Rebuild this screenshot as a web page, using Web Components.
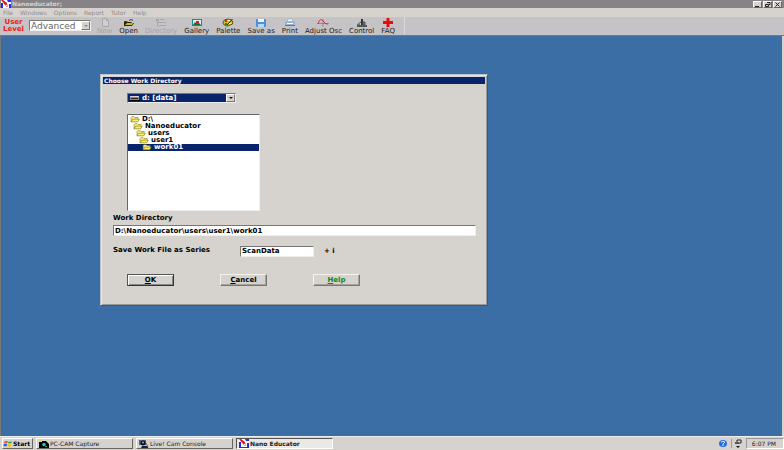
<!DOCTYPE html>
<html lang="en">
<head>
<meta charset="utf-8">
<title>Nanoeducator</title>
<style>
  html, body { margin: 0; height: 100%; }
  body { font: 7px/8px "DejaVu Sans", Verdana, sans-serif; color: #000; overflow: hidden; }
</style>
</head>
<body>
<nano-app></nano-app>
<script>
const define = (name, html, setup) => {
  const template = document.createElement('template');
  template.innerHTML = html;
  customElements.define(name, class extends HTMLElement {
    connectedCallback() {
      if (this.shadowRoot) return;
      const root = this.attachShadow({ mode: 'open' });
      root.append(template.content.cloneNode(true));
      if (setup) setup(root, this);
    }
  });
};

const art = {
  app: '<rect x="1" width="10" height="9" fill="#fff"/><path d="M1 3h2v6H1zM9 4h2v5H9zM3 8h6v1H3zM7 0h4v2H8z" fill="#2828e8"/><path d="M1 0h2l4 3v2H5z" fill="#e01818"/><path d="M5 5l2-1 1 2-1 1z" fill="none" stroke="#d05060" stroke-width=".6"/>',
  new: '<path d="M3.5.5h4l2 2v6h-6zM7.500.500v2h2" fill="#d0cdd0" stroke="#aaa6aa"/>',
  open: '<path d="M1 3h3l1 1h4v2H1z" fill="#786c10"/><path d="M1 8V4l2-1 1 1h4v1h3L9 8z" fill="#2c2800"/><path d="M2 7l2-2h6L9 7z" fill="#c8bc20"/><path d="M6 2.500l2-1 2 1" fill="none" stroke="#222" stroke-width=".8"/>',
  tree: '<path d="M1 1h3v2H1zM5 4h3v1H5zM5 7h3v1H5z" fill="#aaa6aa"/><path d="M2.500 3v5H5M2.500 4.500H5M8 4.500h3M5 1.500h4M8 7.500h3" fill="none" stroke="#aaa6aa"/>',
  gallery: '<rect x="1" y="1" width="10" height="7" fill="#178a86"/><rect x="2" y="2" width="8" height="5" fill="#d9f5f5"/><path d="M2 7l2-3 2 2 2-1 2 2z" fill="#107030"/><path d="M5 3h3v3H5z" fill="#e02020"/>',
  palette: '<path d="M1 4Q2 1 6 1t5 3q0 3-3 3L6 8Q1 8 1 4" fill="#d0c020" stroke="#302800" stroke-width=".7"/><path d="M3 2h2v2H3z" fill="#e02020"/><path d="M3 5h2v2H3z" fill="#149030"/><path d="M6 2h2v1H6zM7 5h2v1H7z" fill="#fff"/><path d="M10.500 1L5 7" stroke="#222"/>',
  save: '<rect x="1" y="1" width="10" height="8" rx="1" fill="#4b91d4"/><path d="M3 1h6v3H3z" fill="#e9f4ff"/><path d="M3 6h6v3H3z" fill="#b9d8f4"/>',
  print: '<path d="M3 4l1-3h4l1 3z" fill="#f4f8ff" stroke="#8aa5c4" stroke-width=".6"/><path d="M1 4l1-1h8l1 1v3H1z" fill="#94b4da"/><path d="M1 7h10v1H1z" fill="#587498"/><path d="M3 5h6v1H3z" fill="#fff"/>',
  osc: '<path d="M0 5.500h12M6 1v8" stroke="#777" stroke-width=".7"/><path d="M1 6Q3-1 6 3t5 3" fill="none" stroke="#c83848"/>',
  control: '<path d="M1 7h10v2H1z" fill="#555"/><path d="M5 1h2v6H5z" fill="#333"/><path d="M2 6l3-2M7 4h2v3H7z" fill="#777" stroke="#555"/><path d="M1 6h3v1H1z" fill="#3a9060"/>',
  faq: '<path d="M4.500 0h3v3H11v3H7.500v3h-3V6H1V3h3.500z" fill="#e80c10"/>',
  folder: '<path d="M1 7.500V2L2 1h3l1 1h4v1.500" fill="#fff69c" stroke="#7c7000" stroke-width=".8"/><path d="M1 7.500L3 4h8.500L9.500 7.500z" fill="#ffef63" stroke="#7c7000" stroke-width=".8"/>',
  drive: '<path d="M1 2h9v4H1z" fill="#8c8c84"/><path d="M1 2h9v1H1z" fill="#d6d3ce"/><path d="M2 4h7v1H2z" fill="#222"/><path d="M1 6h10v1H1z" fill="#000"/>',
  windows: '<path d="M2 2q2-1 4 0L5 4Q3 3 1 4z" fill="#e84020"/><path d="M7 2q2 1 4 0l-1 2q-2 1-4 0z" fill="#30a038"/><path d="M1 5q2-1 4 0L4 8Q2 7 .5 8z" fill="#2060d8"/><path d="M6 5q2 1 4 0L9 8q-2 1-4 0z" fill="#f0c010"/>',
  capture: '<path d="M1 3h2l1-1h4l3 3v4H1z" fill="#000"/><circle cx="6" cy="5.500" r="1.700" fill="#20c8d8"/><path d="M2 1h2v2H2z" fill="#e8d820"/><path d="M7 7h2v1H7z" fill="#20b030"/>',
  live: '<path d="M1 1h7v5H1z" fill="#586078"/><circle cx="5" cy="4" r="2.500" fill="#111"/><circle cx="5" cy="3.500" r="1" fill="#80a8e0"/><path d="M4 7h6v2H3z" fill="#18204a"/><path d="M8 4l2 4" stroke="#806070"/>',
  globe: '<ellipse cx="6" cy="4.500" rx="4" ry="3.500" fill="#2470e8"/><path d="M4 3q2-1.500 4 0L6 5v2" fill="none" stroke="#d8e8ff"/>',
  tray: '<path d="M5 1h4v3H5z" fill="#ddd" stroke="#222"/><path d="M3 3h4v2H3z" fill="#555"/><path d="M4 7h4L6 9z" fill="#111"/>'
};

define('px-icon', `<style>:host{display:block;flex:none;width:12px;height:9px}svg{display:block;width:100%;height:100%}</style><svg viewBox="0 0 12 9" aria-hidden="true"></svg>`,
  (root, el) => { root.querySelector('svg').innerHTML = art[el.getAttribute('name')]; });

define('window-controls', `<style>
  :host{display:flex;gap:1px}
  button{width:9px;height:7px;padding:0;border:1px solid;border-color:#fff #666 #666 #fff;background:#d6d3ce;display:grid;place-items:center}
  svg{width:7px;height:5px;display:block} path{fill:none;stroke:#222}
</style>
<button aria-label="Minimize"><svg viewBox="0 0 7 5"><path d="M1 4.500h4"/></svg></button>
<button aria-label="Restore"><svg viewBox="0 0 7 5"><path d="M3 .5h3v2H5M1.500 2.500h3v2h-3z"/></svg></button>
<button aria-label="Close"><svg viewBox="0 0 7 5"><path d="M1.500.500l4 4M5.500.500l-4 4"/></svg></button>`);

define('title-bar', `<style>
  :host{display:flex;align-items:center;height:8px;background:#868286;color:#d6d3ce;font-size:6px;font-weight:bold;padding-right:2px}
  span{flex:1}
</style><px-icon name="app"></px-icon><span><slot></slot></span><window-controls></window-controls>`);

define('menu-bar', `<style>
  :host{display:flex;gap:7px;height:9px;padding-left:3px;background:#d6d3ce;font-size:6px}
  ::slotted(button){all:unset;color:#8c8a88;line-height:9px}
</style><slot></slot>`);

define('tool-button', `<style>
  :host{display:block}
  button{display:flex;flex-direction:column;align-items:center;border:0;padding:0;background:none;font:inherit;color:#222}
  button:disabled{color:#a5a2a5}
</style><button><slot></slot></button>`,
  (root, el) => {
    const button = root.querySelector('button');
    const icon = document.createElement('px-icon');
    icon.setAttribute('name', el.getAttribute('icon'));
    button.prepend(icon);
    button.disabled = el.hasAttribute('disabled');
  });

define('drop-down', `<style>
  :host{display:flex;box-sizing:border-box;position:relative;border:1px solid;border-color:#777 #eee #eee #777;background:#fff}
  select{appearance:none;flex:1;min-width:0;border:0;margin:0;padding:0 0 0 1px;border-radius:0;background:transparent;font:inherit;color:inherit;outline:0}
  i{flex:none;width:9px;box-sizing:border-box;border:1px solid;border-color:#fff #777 #777 #fff;background:#d6d3ce;display:grid;place-items:center;pointer-events:none}
  i::after{content:"";border:2px solid transparent;border-top-color:var(--arrow,#111);border-bottom:0}
  .fill{display:flex;flex:1;min-width:0;align-items:center;background:var(--fill,#fff)}
</style><div class="fill"><slot name="icon"></slot><select></select></div><i></i>`,
  (root, el) => {
    const select = root.querySelector('select');
    select.setAttribute('aria-label', el.getAttribute('label'));
    select.append(new Option(el.getAttribute('value')));
  });

define('tool-bar', `<style>
  :host{display:flex;align-items:flex-start;height:18px;background:#c6c3c6;border-bottom:1px solid #777;padding-left:2px}
  b{color:#f01c1c;text-align:center;padding-top:2px;line-height:7px;width:23px}
  drop-down{width:62px;height:11px;margin:3px 6px 0 4px;font-size:9px;color:#666;--arrow:#888}
  .tools{display:flex;gap:7px;padding:1px 9px 0 0;border-right:1px solid #dedbde;height:16px}
</style>
<b>User Level</b><drop-down label="User Level" value="Advanced"></drop-down>
<div class="tools">
<tool-button icon="new" disabled>New</tool-button><tool-button icon="open">Open</tool-button>
<tool-button icon="tree" disabled>Directory</tool-button><tool-button icon="gallery">Gallery</tool-button>
<tool-button icon="palette">Palette</tool-button><tool-button icon="save">Save as</tool-button>
<tool-button icon="print">Print</tool-button><tool-button icon="osc">Adjust Osc</tool-button>
<tool-button icon="control">Control</tool-button><tool-button icon="faq">FAQ</tool-button></div>`);

define('push-button', `<style>
  :host{display:block;width:47px}
  button{width:100%;height:12px;padding:0;border:1px solid;border-color:#f4f2ee #777 #777 #f4f2ee;box-shadow:inset -1px -1px #a5a29c;background:#d6d3ce;font:inherit;font-weight:bold;color:inherit;line-height:9px}
  :host([default]) button{border-color:#555 #333 #333 #555;box-shadow:inset 1px 1px #fff,inset -1px -1px #888}
</style><button><slot></slot></button>`);

define('text-field', `<style>
  :host{display:block}
  input{display:block;box-sizing:border-box;width:100%;height:11px;border:1px solid;border-color:#777 #eee #eee #777;padding:0 1px;background:#fff;font:inherit;color:#000;outline:0;border-radius:0}
</style><input>`,
  (root, el) => {
    const input = root.querySelector('input');
    input.value = el.getAttribute('value');
    input.setAttribute('aria-label', el.getAttribute('label'));
  });

define('folder-item', `<style>
  :host{display:flex;align-items:center;gap:1px;height:7px;line-height:7px;padding-left:calc(1px + var(--depth,0) * 3px)}
  :host([aria-selected="true"]){background:#08246b;color:#fff}
  px-icon{width:12px;height:7px}
</style><px-icon name="folder"></px-icon><slot></slot>`);

define('directory-dialog', `<style>
  :host{display:block;box-sizing:border-box;border:1px solid;border-color:#b8c0cc #555 #555 #b8c0cc;box-shadow:inset 1px 1px #e8e6e2,inset -1px -1px #999;background:#d6d3ce;padding:2px;font-weight:bold}
  h1{margin:0;padding-left:1px;background:#08246b;color:#fff;font-size:6px;line-height:7px;height:7px}
  form{padding:9px 9px 17px 10px;display:flex;flex-direction:column}
  drop-down{width:109px;height:10px;margin-left:14px;--fill:#08246b;color:#fff}
  drop-down px-icon{margin-left:1px}
  .list{margin:11px 0 0 14px;width:133px;height:97px;box-sizing:border-box;border:1px solid;border-color:#666 #eee #eee #666;background:#fff;padding-top:1px}
  label{margin-top:3px}
  .path{margin:3px 0 0}
  .series{display:flex;align-items:center;margin-top:9px;gap:10px}
  .series span{width:117px;line-height:10px;padding-bottom:2px}
  .series text-field{width:74px}
  .actions{display:flex;gap:46px;margin:17px 0 0 14px}
  .help{color:#108810}
</style>
<h1>Choose Work Directory</h1>
<form onsubmit="return false">
  <drop-down label="Drive" value="d: [data]"><px-icon slot="icon" name="drive"></px-icon></drop-down>
  <div class="list" role="listbox" aria-label="Folders">
    <folder-item role="option">D:\\</folder-item>
    <folder-item role="option" style="--depth:1">Nanoeducator</folder-item>
    <folder-item role="option" style="--depth:2">users</folder-item>
    <folder-item role="option" style="--depth:3">user1</folder-item>
    <folder-item role="option" style="--depth:4" aria-selected="true">work01</folder-item>
  </div>
  <label>Work Directory</label>
  <text-field class="path" label="Work Directory" value="D:\\Nanoeducator\\users\\user1\\work01"></text-field>
  <div class="series"><span>Save Work File as Series</span><text-field label="Save Work File as Series" value="ScanData"></text-field><div>+ i</div></div>
  <div class="actions"><push-button default><u>O</u>K</push-button><push-button><u>C</u>ancel</push-button><push-button class="help"><u>H</u>elp</push-button></div>
</form>`);

define('task-button', `<style>
  :host{display:block;width:97px}
  button{display:flex;align-items:center;width:100%;height:11px;padding:0 1px;border:1px solid;border-color:#fff #666 #666 #fff;background:#d6d3ce;font:inherit;color:#222;white-space:nowrap}
  :host([active]) button{border-color:#555 #fff #fff #555;background:#ebe9e6;font-weight:bold}
  :host([start]){width:31px}
  :host([start]) button{font-weight:bold;padding:0;color:#000}
  :host([start]) ::slotted(px-icon){width:10px}
</style><button><slot></slot></button>`);

define('task-bar', `<style>
  :host{display:flex;align-items:center;gap:3px;height:13px;padding-left:2px;background:#d6d3ce;border-top:1px solid #f0eeea;font-size:6px}
  .tray{margin-left:auto;display:flex;align-items:center;gap:2px}
  .tray px-icon + px-icon{border-left:1px solid #999}
  time{box-sizing:border-box;border:1px solid;border-color:#999 #fff #fff #999;padding:0 7px 0 5px;line-height:9px;color:#222}
</style>
<task-button start><px-icon name="windows"></px-icon>Start</task-button>
<task-button><px-icon name="capture"></px-icon>PC-CAM Capture</task-button>
<task-button><px-icon name="live"></px-icon>Live! Cam Console</task-button>
<task-button active><px-icon name="app"></px-icon>Nano Educator</task-button>
<div class="tray"><px-icon name="globe"></px-icon><px-icon name="tray"></px-icon><time>6:07 PM</time></div>`);

define('nano-app', `<style>
  :host{display:flex;flex-direction:column;height:100%}
  main{flex:1;position:relative;background:#3a6ea5;border-left:1px solid #777;border-right:2px solid #d6d3ce;min-height:0}
  directory-dialog{position:absolute;left:99px;top:38px;width:388px}
</style>
<title-bar>Nanoeducator;</title-bar>
<menu-bar><button>File</button><button>Windows</button><button>Options</button><button>Report</button><button>Tutor</button><button>Help</button></menu-bar>
<tool-bar></tool-bar>
<main><directory-dialog></directory-dialog></main>
<task-bar></task-bar>`);
</script>
</body>
</html>
